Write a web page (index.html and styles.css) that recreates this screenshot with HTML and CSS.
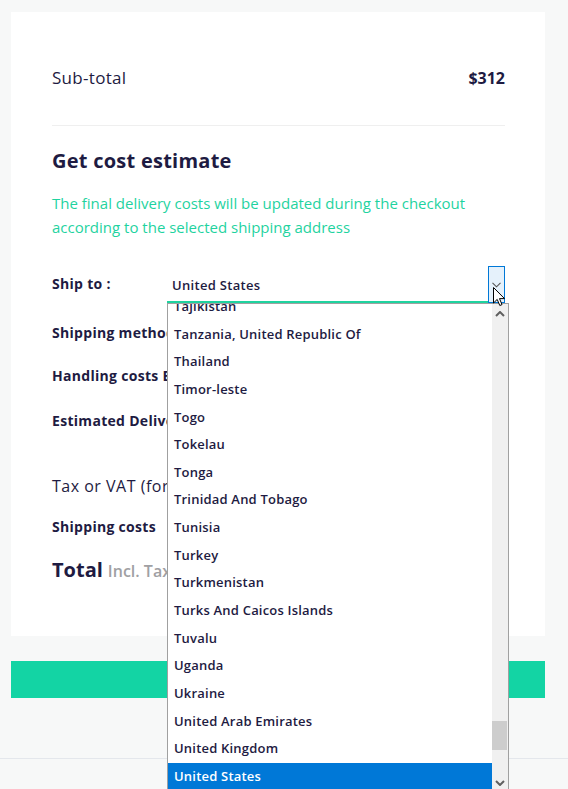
FILE: index.html
```html
<!DOCTYPE html>
<html>
<head>
<meta charset="utf-8">
<link rel="stylesheet" href="styles.css">
</head>
<body>
<div class="page">
  <div class="card">
    <div class="row subtotal">
      <span>Sub-total</span>
      <span class="amount">$312</span>
    </div>
    <div class="sep"></div>
    <h2 class="heading">Get cost estimate</h2>
    <p class="note">The final delivery costs will be updated during the checkout according to the selected shipping address</p>
    <div class="row shipto">
      <span class="label">Ship to :</span>
      <div class="select">
        <span class="select-value">United States</span>
        <span class="select-btn">
          <svg width="9" height="6" viewBox="0 0 9 6"><path d="M0.5 0.8 L4.5 4.8 L8.5 0.8" fill="none" stroke="#555" stroke-width="1.1"/></svg>
        </span>
      </div>
    </div>
    <div class="row r-method"><span class="label">Shipping method</span></div>
    <div class="row r-handling"><span class="label">Handling costs Estimated</span></div>
    <div class="row r-delivery"><span class="label">Estimated Delivery</span></div>
    <div class="row r-tax"><span class="plain">Tax or VAT (for your country)</span></div>
    <div class="row r-shipcost"><span class="label">Shipping costs</span></div>
    <div class="row r-total"><span class="total">Total</span><span class="incl">Incl. Taxes</span></div>
  </div>
  <div class="cta"></div>
  <div class="footer-line"></div>
</div>

<div class="dropdown">
  <ul class="options">
    <li>Tajikistan</li>
    <li>Tanzania, United Republic Of</li>
    <li>Thailand</li>
    <li>Timor-leste</li>
    <li>Togo</li>
    <li>Tokelau</li>
    <li>Tonga</li>
    <li>Trinidad And Tobago</li>
    <li>Tunisia</li>
    <li>Turkey</li>
    <li>Turkmenistan</li>
    <li>Turks And Caicos Islands</li>
    <li>Tuvalu</li>
    <li>Uganda</li>
    <li>Ukraine</li>
    <li>United Arab Emirates</li>
    <li>United Kingdom</li>
    <li class="selected">United States</li>
  </ul>
  <div class="scrollbar">
    <svg class="arrow-up" width="10" height="6" viewBox="0 0 10 6"><path d="M1 5 L5 1 L9 5" fill="none" stroke="#606060" stroke-width="2"/></svg>
    <div class="thumb"></div>
    <svg class="arrow-down" width="10" height="6" viewBox="0 0 10 6"><path d="M1 1 L5 5 L9 1" fill="none" stroke="#606060" stroke-width="2"/></svg>
  </div>
</div>

<svg class="cursor" width="14" height="20" viewBox="0 0 14 20"><path d="M0.5 0.5 L0.5 16 L4.2 12.4 L6.8 18.5 L9 17.6 L6.5 11.6 L11.5 11.6 Z" fill="#fff" stroke="#000" stroke-width="1" stroke-linejoin="miter"/></svg>
</body>
</html>
```
FILE: styles.css
```css
html, body {
  margin: 0;
  padding: 0;
  background: #f7f8f8;
  overflow: hidden;
}
body {
  font-family: "Open Sans", "Liberation Sans", sans-serif;
  color: #1e1b42;
  width: 568px;
  height: 789px;
  position: relative;
}
.page {
  padding-top: 12px;
}
.card {
  margin: 0 23px 0 11px;
  background: #fff;
  padding: 54px 40px 51px 41px;
}
.row {
  display: flex;
  align-items: center;
  justify-content: space-between;
  line-height: 24px;
}
.subtotal {
  font-size: 17px;
  letter-spacing: 0.3px;
}
.amount {
  font-weight: 700;
  font-size: 16px;
  letter-spacing: 0;
}
.sep {
  height: 1px;
  background: #efefef;
  margin-top: 35px;
}
.heading {
  margin: 21px 0 0;
  font-size: 20px;
  line-height: 28px;
  font-weight: 700;
  letter-spacing: 0.25px;
}
.note {
  margin: 16px 0 0;
  color: #1fd39f;
  font-size: 15px;
  line-height: 24px;
}
.label {
  font-size: 14px;
  font-weight: 700;
  letter-spacing: 0.3px;
}
.plain {
  font-size: 16px;
  letter-spacing: 0.5px;
}
.shipto {
  margin-top: 27px;
  align-items: flex-start;
}
.shipto .label {
  padding-top: 6px;
}
.select {
  width: 338px;
  height: 35px;
  border-bottom: 2px solid #1fd39f;
  display: flex;
  align-items: center;
  justify-content: space-between;
}
.select-value {
  font-size: 13px;
  font-weight: 600;
  letter-spacing: 0.3px;
  padding-left: 5px;
  padding-top: 3px;
}
.select-btn {
  width: 15px;
  height: 35px;
  border: 1px solid #0078d7;
  background: #e5f1fb;
  display: flex;
  align-items: center;
  justify-content: center;
  margin-bottom: -2px;
  box-sizing: content-box;
}
.r-method { margin-top: 18px; }
.r-handling { margin-top: 19px; }
.r-delivery { margin-top: 21px; }
.r-tax { margin-top: 41px; }
.r-shipcost { margin-top: 17px; }
.r-total {
  margin-top: 17px;
  justify-content: flex-start;
  line-height: 28px;
  gap: 5px;
  align-items: baseline;
}
.total {
  font-size: 20px;
  font-weight: 700;
}
.incl {
  font-size: 16px;
  color: #a0a0a3;
  font-weight: 600;
}
.cta {
  margin: 25px 23px 0 11px;
  height: 37px;
  background: #13d4a4;
}
.footer-line {
  margin-top: 60px;
  height: 1px;
  background: #e4e7ec;
}
.dropdown {
  position: absolute;
  left: 167px;
  top: 303px;
  width: 340px;
  height: 485px;
  border: 1px solid #a0a0a0;
  border-bottom: none;
  background: #fff;
  overflow: hidden;
}
.options {
  list-style: none;
  margin: -11px 16px 0 0;
  padding: 0;
}
.options li {
  height: 27.65px;
  line-height: 27.65px;
  padding-left: 6px;
  font-size: 13px;
  font-weight: 600;
  letter-spacing: 0.2px;
  color: #1e1b42;
  white-space: nowrap;
}
.options li.selected {
  background: #0078d7;
  color: #fff;
}
.scrollbar {
  position: absolute;
  right: 0;
  top: 0;
  width: 16px;
  height: 100%;
  background: #f0f0f0;
}
.arrow-up {
  position: absolute;
  left: 3px;
  top: 7px;
}
.arrow-down {
  position: absolute;
  left: 3px;
  top: 476px;
}
.thumb {
  position: absolute;
  left: 0;
  top: 417px;
  width: 15px;
  height: 29px;
  background: #cdcdcd;
}
.cursor {
  position: absolute;
  left: 493px;
  top: 287px;
}
```
